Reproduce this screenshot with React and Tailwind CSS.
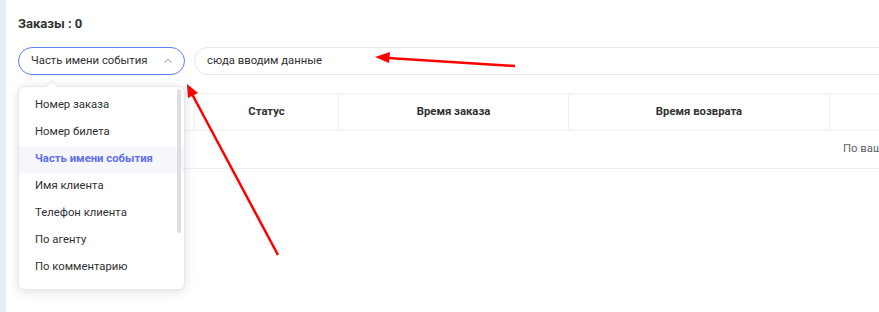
import React from "react";

const options = [
  "Номер заказа",
  "Номер билета",
  "Часть имени события",
  "Имя клиента",
  "Телефон клиента",
  "По агенту",
  "По комментарию",
  "По промокоду",
];

const columns = [
  { title: "", w: "w-[177px]" },
  { title: "Статус", w: "w-[144px]" },
  { title: "Время заказа", w: "w-[230px]" },
  { title: "Время возврата", w: "w-[261px]" },
  { title: "", w: "w-[300px]" },
];

const App = () => {
  return (
    <div className="relative flex h-[312px] w-[879px] overflow-hidden bg-white font-['Roboto',sans-serif] text-[#303133]">
      {/* left rail */}
      <div className="w-[6px] shrink-0 bg-[#e8eef6]"></div>

      <div className="flex-1 pl-3 pt-[16px]">
        <h1 className="text-[13px] font-bold leading-4">Заказы : 0</h1>

        {/* Filters */}
        <div className="mt-[15px] flex items-center gap-[9px]">
          <div className="flex h-[28px] w-[167px] shrink-0 items-center justify-between rounded-full border border-[#5d80f4] pl-[12px] pr-[10px] text-[11.3px] text-[#303133]">
            <span>Часть имени события</span>
            <svg className="h-3 w-3 text-[#b4b8c0]" viewBox="0 0 12 12" fill="none" stroke="currentColor" strokeWidth="1.2">
              <path d="M2.5 7.5 6 4l3.5 3.5" />
            </svg>
          </div>
          <div className="flex h-[28px] w-[800px] shrink-0 items-center rounded-full border border-[#e4e7ed] pl-[12px] text-[11.3px] text-[#303133]">
            сюда вводим данные
          </div>
        </div>

        {/* Table */}
        <div className="mt-[18px] w-[1200px] text-[11.3px]">
          <div className="flex h-[38px] border-y border-[#ebeef5]">
            {columns.map((c, i) => (
              <div
                key={i}
                className={`${c.w} flex shrink-0 items-center justify-center border-r border-[#ebeef5] font-bold`}
              >
                {c.title}
              </div>
            ))}
          </div>
          <div className="flex h-[38px] items-center border-b border-[#ebeef5] pl-[825px] text-[#606266]">
            По вашему запросу ничего не найдено
          </div>
        </div>
      </div>

      {/* Dropdown */}
      <div className="absolute left-[18px] top-[86px] h-[204px] w-[167px] rounded-md border border-[#e4e7ed] bg-white shadow-[0_2px_12px_rgba(0,0,0,0.12)]">
        <div className="absolute -top-[5px] left-[28px] h-[9px] w-[9px] rotate-45 border-l border-t border-[#e4e7ed] bg-white"></div>
        <div className="relative h-full overflow-hidden rounded-md pt-[5px]">
          {options.map((o) => (
            <div
              key={o}
              className={`flex h-[27px] items-center pl-[16px] text-[11.3px] ${
                o === "Часть имени события" ? "bg-[#f5f7fa] font-bold text-[#5e6ef2]" : "text-[#303133]"
              }`}
            >
              {o}
            </div>
          ))}
          <div className="absolute right-[3px] top-[2px] h-[144px] w-[4px] rounded-full bg-[#dcdee2]"></div>
        </div>
      </div>

      {/* Annotation arrows */}
      <svg className="pointer-events-none absolute left-0 top-0" width="879" height="312">
        <line x1="515" y1="66" x2="388" y2="58" stroke="#ff0000" strokeWidth="2.5" />
        <polygon points="375,57 390,52 389,63" fill="#ff0000" />
        <line x1="278" y1="255" x2="192" y2="94" stroke="#ff0000" strokeWidth="2.5" />
        <polygon points="187,84 198,93 188,98" fill="#ff0000" />
      </svg>
    </div>
  );
};

export default App;
